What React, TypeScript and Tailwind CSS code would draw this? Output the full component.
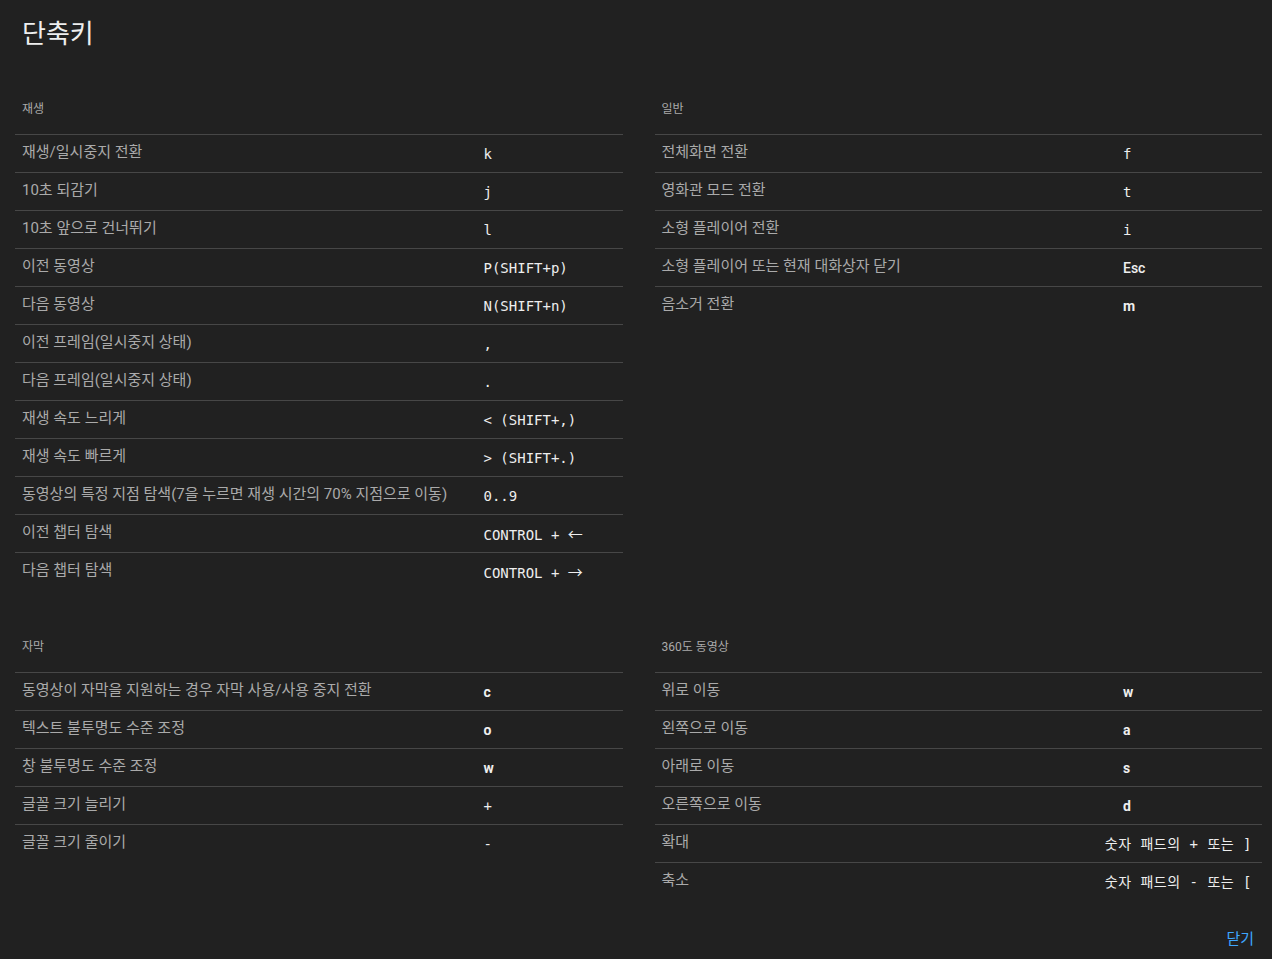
type Shortcut = { label: string; keys: string; sans?: boolean; right?: boolean };

const playback: Shortcut[] = [
  { label: '재생/일시중지 전환', keys: 'k' },
  { label: '10초 되감기', keys: 'j' },
  { label: '10초 앞으로 건너뛰기', keys: 'l' },
  { label: '이전 동영상', keys: 'P(SHIFT+p)' },
  { label: '다음 동영상', keys: 'N(SHIFT+n)' },
  { label: '이전 프레임(일시중지 상태)', keys: ',' },
  { label: '다음 프레임(일시중지 상태)', keys: '.' },
  { label: '재생 속도 느리게', keys: '< (SHIFT+,)' },
  { label: '재생 속도 빠르게', keys: '> (SHIFT+.)' },
  { label: '동영상의 특정 지점 탐색(7을 누르면 재생 시간의 70% 지점으로 이동)', keys: '0..9' },
  { label: '이전 챕터 탐색', keys: 'CONTROL + ←' },
  { label: '다음 챕터 탐색', keys: 'CONTROL + →' },
];

const general: Shortcut[] = [
  { label: '전체화면 전환', keys: 'f' },
  { label: '영화관 모드 전환', keys: 't' },
  { label: '소형 플레이어 전환', keys: 'i' },
  { label: '소형 플레이어 또는 현재 대화상자 닫기', keys: 'Esc', sans: true },
  { label: '음소거 전환', keys: 'm', sans: true },
];

const captions: Shortcut[] = [
  { label: '동영상이 자막을 지원하는 경우 자막 사용/사용 중지 전환', keys: 'c', sans: true },
  { label: '텍스트 불투명도 수준 조정', keys: 'o', sans: true },
  { label: '창 불투명도 수준 조정', keys: 'w', sans: true },
  { label: '글꼴 크기 늘리기', keys: '+' },
  { label: '글꼴 크기 줄이기', keys: '-' },
];

const spherical: Shortcut[] = [
  { label: '위로 이동', keys: 'w', sans: true },
  { label: '왼쪽으로 이동', keys: 'a', sans: true },
  { label: '아래로 이동', keys: 's', sans: true },
  { label: '오른쪽으로 이동', keys: 'd', sans: true },
  { label: '확대', keys: '숫자 패드의 + 또는 ]', right: true },
  { label: '축소', keys: '숫자 패드의 - 또는 [', right: true },
];

// arrows look wider in the original, so they get the CJK face
function KeyText({ text }: { text: string }) {
  const arrow = text.match(/[←→]$/);
  if (!arrow) return <>{text}</>;
  return (
    <>
      {text.slice(0, -1)}
      <span className="font-['Noto_Sans_CJK_KR',sans-serif] font-normal text-[15px]">{arrow[0]}</span>
    </>
  );
}

function Section({ title, items }: { title: string; items: Shortcut[] }) {
  return (
    <div className="flex flex-col">
      <div className="h-[52px] flex items-center pt-[2px] pl-[7px] text-[12px] text-[#aaaaaa]">{title}</div>
      {items.map((s) => (
        <div key={s.label} className="h-[38px] flex border-t border-[#474747]">
          <div className="flex-1 pl-[7px] pt-[7px] text-[15px] leading-5 text-[#aaaaaa] whitespace-nowrap">
            {s.label}
          </div>
          <div
            className={`w-[139px] pt-[9px] leading-5 text-[#eeeeee] whitespace-pre flex ${
              s.right ? 'justify-end pr-[10px]' : ''
            } ${
              s.sans
                ? s.keys === 'Esc'
                  ? "font-['Roboto',sans-serif] font-medium text-[14px]"
                  : "font-['Roboto',sans-serif] font-bold text-[14px]"
                : "font-['DejaVu_Sans_Mono','Noto_Sans_CJK_KR',monospace] text-[14px]"
            }`}
          >
            <span className={s.right ? 'tracking-[0.5px]' : ''}>
              <KeyText text={s.keys} />
            </span>
          </div>
        </div>
      ))}
    </div>
  );
}

export default function App() {
  return (
    <div className="min-h-[959px] bg-[#212121] pl-[15px] pr-[10px] font-['Roboto','Noto_Sans_CJK_KR',sans-serif]">
      <div className="pl-[7px] pt-[18px] text-[26px] leading-8 text-[#eeeeee]">단축키</div>

      <div className="mt-[32px] grid grid-cols-2 gap-x-[32px] gap-y-[30px]">
        <Section title="재생" items={playback} />
        <Section title="일반" items={general} />
        <Section title="자막" items={captions} />
        <Section title="360도 동영상" items={spherical} />
      </div>

      <div className="flex justify-end pt-[28px] pr-[8px]">
        <button className="text-[15px] text-[#3ea6ff]">닫기</button>
      </div>
    </div>
  );
}
